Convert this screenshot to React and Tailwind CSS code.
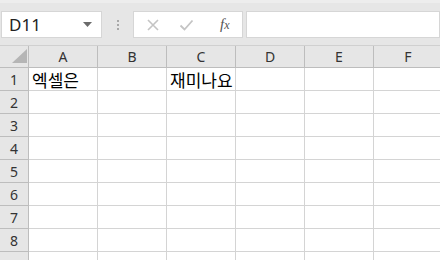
import React from "react";

const cols = ["A", "B", "C", "D", "E", "F"];
const rows = [1, 2, 3, 4, 5, 6, 7, 8, 9];
const cells = { "1A": "엑셀은", "1C": "재미나요" };

export default function App() {
  return (
    <div className="w-[440px] h-[260px] overflow-hidden bg-white font-['Noto_Sans','Noto_Sans_CJK_KR',sans-serif]">
      {/* formula bar */}
      <div className="h-[45px] bg-[#e6e6e6] flex items-start pt-[8px] border-t-[3px] border-[#ededed]">
        <div className="ml-[1px] w-[101px] h-[27px] bg-white border border-[#d6d6d6] flex items-center pl-[7px] pr-[9px] text-[17px] text-[#222]">
          <span className="flex-1 leading-none">D11</span>
          <svg width="9" height="5" viewBox="0 0 9 5">
            <path d="M0 0h9L4.5 5z" fill="#6b6b6b" />
          </svg>
        </div>
        <div className="w-[31px] h-[27px] flex flex-col items-center justify-center gap-[2px]">
          <span className="w-[2px] h-[2px] bg-[#a8a8a8]" />
          <span className="w-[2px] h-[2px] bg-[#a8a8a8]" />
          <span className="w-[2px] h-[2px] bg-[#a8a8a8]" />
        </div>
        <div className="w-[110px] h-[27px] bg-white border border-[#d6d6d6] flex items-center">
          <svg className="ml-[12px]" width="14" height="14" viewBox="0 0 14 14">
            <path d="M2 2l10 10M12 2L2 12" stroke="#c4c4c4" strokeWidth="1.6" />
          </svg>
          <svg className="ml-[19px]" width="15" height="14" viewBox="0 0 15 14">
            <path d="M1.5 7.5l4 4L13.5 2.5" stroke="#c4c4c4" strokeWidth="1.8" fill="none" />
          </svg>
          <span className="ml-[26px] text-[15px] italic text-[#555] font-['Liberation_Serif',serif] leading-none">
            f<span className="text-[12px]">x</span>
          </span>
        </div>
        <div className="ml-[3px] flex-1 h-[27px] bg-white border border-[#d6d6d6]" />
      </div>

      {/* sheet */}
      <div className="grid grid-cols-[29px_repeat(6,69px)] grid-rows-[22px_repeat(9,23px)] border-t border-[#d0d0d0]">
        <div className="bg-[#e6e6e6] border-r border-b border-[#bdbdbd] relative">
          <svg className="absolute left-[12px] bottom-[4px]" width="15" height="14" viewBox="0 0 15 14">
            <path d="M15 0V14H0z" fill="#b5b5b5" />
          </svg>
        </div>
        {cols.map((c) => (
          <div
            key={c}
            className="bg-[#e6e6e6] border-r border-b border-[#bdbdbd] flex items-center justify-center text-[14px] text-[#333]"
          >
            {c}
          </div>
        ))}
        {rows.map((r) => (
          <React.Fragment key={r}>
            <div className="bg-[#e6e6e6] border-r border-b border-[#bdbdbd] flex items-center justify-center text-[14px] text-[#333]">
              {r < 9 ? r : ""}
            </div>
            {cols.map((c) => (
              <div
                key={c}
                className="border-r border-b border-[#d4d4d4] pl-[3px] flex items-center text-[17px] text-black whitespace-nowrap font-['Noto_Sans_CJK_KR',sans-serif] leading-none"
              >
                {cells[r + c] || ""}
              </div>
            ))}
          </React.Fragment>
        ))}
      </div>
    </div>
  );
}
